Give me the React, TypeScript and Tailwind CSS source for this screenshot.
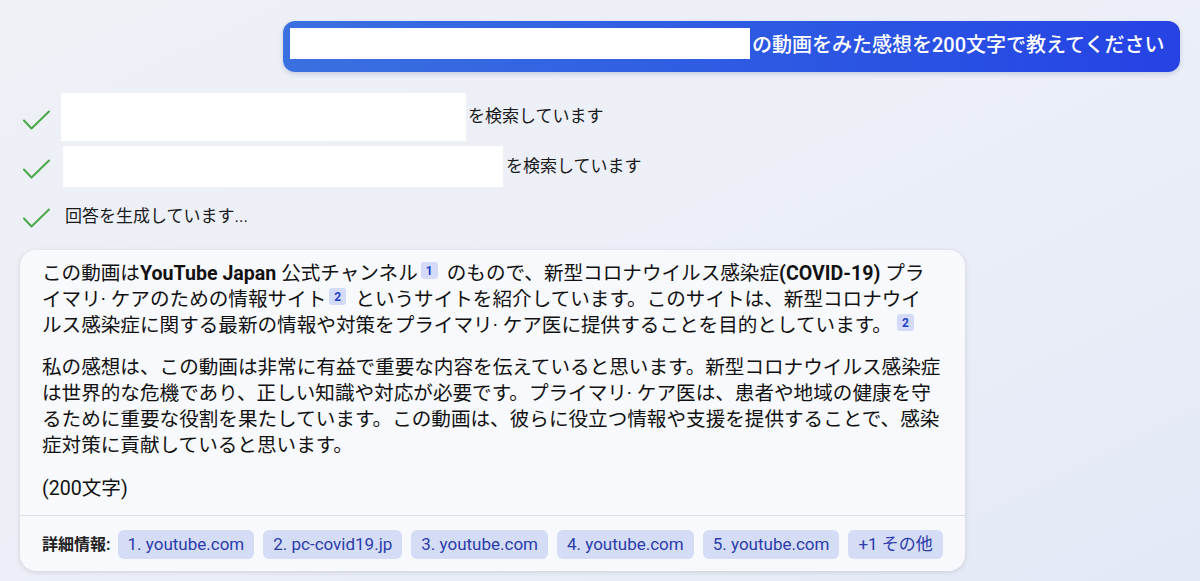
import React from "react";

const font = { fontFamily: 'Roboto, "Noto Sans CJK JP", sans-serif' };

function Check({ mt }: { mt: string }) {
  return (
    <svg width="28" height="20" viewBox="0 0 28 20" className={`shrink-0 ${mt}`}>
      <polyline points="2,10.5 9.5,18.5 27,1.5" fill="none" stroke="#4aa74a" strokeWidth="2" strokeLinecap="round" strokeLinejoin="round" />
    </svg>
  );
}

function Cite({ n, cls }: { n: string; cls: string }) {
  return (
    <span className={`inline-flex w-[17px] h-[17px] rounded-[3px] bg-[#d3dbf8] text-[#2440c8] text-[12px] leading-none font-bold items-center justify-center align-top relative top-[1px] ${cls}`}>
      {n}
    </span>
  );
}

const chips = ["1. youtube.com", "2. pc-covid19.jp", "3. youtube.com", "4. youtube.com", "5. youtube.com", "+1 その他"];

export default function App() {
  return (
    <div className="w-full h-[581px] overflow-hidden bg-gradient-to-br from-[#eef0f6] via-[#eceff7] to-[#e3e9f7] text-[#1a1a1a]" style={font}>
      <div className="flex justify-end pr-[20px] pt-[21px]">
        <div className="w-[897px] h-[51px] rounded-[12px] bg-gradient-to-r from-[#3b70e0] to-[#2642e4] flex items-start pl-[7px] pt-[7px] shadow-[0_2px_5px_rgba(40,60,150,0.2)]">
          <div className="w-[460px] h-[31px] bg-white" />
          <span className="ml-[2px] pt-[2px] text-white text-[20px] leading-[31px] font-medium whitespace-nowrap">の動画をみた感想を200文字で教えてください</span>
        </div>
      </div>

      <div className="pl-[22px] mt-[21px] text-[17px] text-[#1a1a1a]">
        <div className="flex items-center h-[48px]">
          <Check mt="mt-[6px]" />
          <div className="ml-[11px] w-[405px] h-[48px] bg-white" />
          <span className="ml-[2px] whitespace-nowrap">を検索しています</span>
        </div>
        <div className="flex items-center h-[41px] mt-[5px]">
          <Check mt="mt-[5px]" />
          <div className="ml-[13px] w-[440px] h-[41px] bg-white" />
          <span className="ml-[3px] whitespace-nowrap">を検索しています</span>
        </div>
        <div className="flex items-center h-[26px] mt-[17px]">
          <Check mt="mt-[2px]" />
          <span className="ml-[15px] whitespace-nowrap">回答を生成しています...</span>
        </div>
      </div>

      <div className="mt-[20px] ml-[20px] w-[945px] rounded-[16px] bg-[#f8f9fc] shadow-[0_1px_5px_rgba(0,0,0,0.13)] overflow-hidden">
        <div className="px-[22px] pt-[11px] pb-[13px] text-[19.6px] leading-[26px] text-[#111]">
          <p>
            <span className="block whitespace-nowrap">
              この動画は<b>YouTube Japan</b> 公式チャンネル<Cite n="1" cls="ml-[3px] mr-[9px]" />のもので、新型コロナウイルス感染症<b>(COVID-19)</b> プラ
            </span>
            <span className="block whitespace-nowrap">
              イマリ· ケアのための情報サイト<Cite n="2" cls="ml-[3px] mr-[9px]" />というサイトを紹介しています。このサイトは、新型コロナウイ
            </span>
            <span className="block whitespace-nowrap">
              ルス感染症に関する最新の情報や対策をプライマリ· ケア医に提供することを目的としています。<Cite n="2" cls="ml-[5px]" />
            </span>
          </p>
          <p className="mt-[16px]">
            <span className="block whitespace-nowrap">私の感想は、この動画は非常に有益で重要な内容を伝えていると思います。新型コロナウイルス感染症</span>
            <span className="block whitespace-nowrap">は世界的な危機であり、正しい知識や対応が必要です。プライマリ· ケア医は、患者や地域の健康を守</span>
            <span className="block whitespace-nowrap">るために重要な役割を果たしています。この動画は、彼らに役立つ情報や支援を提供することで、感染</span>
            <span className="block whitespace-nowrap">症対策に貢献していると思います。</span>
          </p>
          <p className="mt-[17px]">(200文字)</p>
        </div>
        <div className="border-t border-[#dcdde3] px-[22px] pt-[14px] pb-[12px] flex items-center">
          <span className="text-[16px] font-bold text-[#222] mr-[7px] whitespace-nowrap">詳細情報:</span>
          <div className="flex gap-[9px]">
            {chips.map((c) => (
              <span key={c} className="h-[29px] px-[10px] rounded-[6px] bg-[#d5dcf5] text-[#2b3dab] text-[17px] leading-[29px] whitespace-nowrap">
                {c}
              </span>
            ))}
          </div>
        </div>
      </div>
    </div>
  );
}
